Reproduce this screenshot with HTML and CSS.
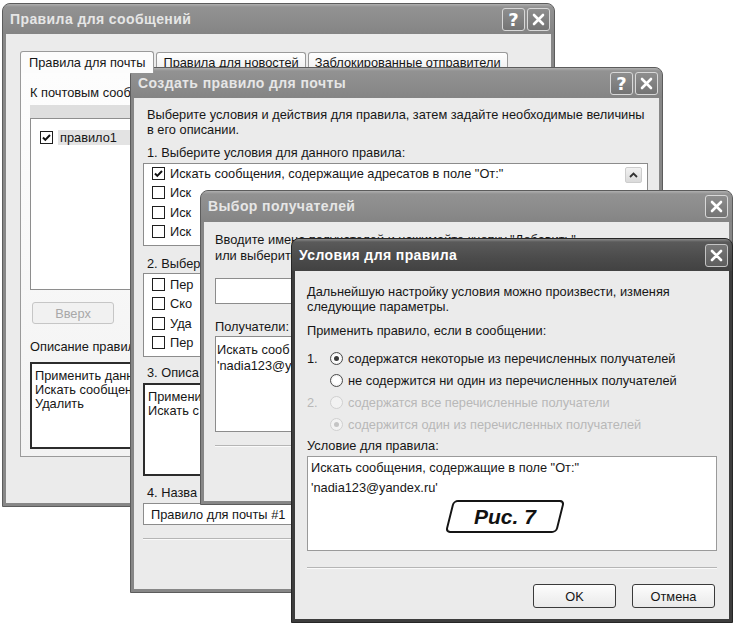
FILE: index.html
```html
<!DOCTYPE html>
<html lang="ru">
<head>
  <meta charset="UTF-8">
  <title>Правила для сообщений</title>
  <link rel="stylesheet" href="styles.css">
</head>
<body>
<div class="desk">

  <!-- окно 1 (видна только левая часть, остальное под окном 2) -->
  <section class="win w-rules">
    <header class="title">
      <span class="caption">Правила для сообщений</span>
      <span class="tb-btns">
        <span class="tb-btn">?</span>
        <span class="tb-btn"><svg width="13" height="13" viewBox="0 0 13 13"><path d="M2 2l9 9M11 2l-9 9" stroke="#fff" stroke-width="2.6" stroke-linecap="round"/></svg></span>
      </span>
    </header>
    <div class="body">
      <div class="tabs">
        <span class="tab active">Правила для почты</span>
        <span class="tab">Правила для новостей</span>
        <span class="tab">Заблокированные отправители</span>
      </div>
      <div class="tab-panel">
        <p>К почтовым сооб</p>
        <div class="rule-list">
          <div class="rule-head"></div>
          <div class="rule-body">
            <div class="rule-row">
              <i class="chk on"><svg width="11" height="11" viewBox="0 0 11 11"><path d="M2 5.5l2.3 2.4L9 3" stroke="#111" stroke-width="2" fill="none"/></svg></i>
              <span class="sel">правило1</span>
            </div>
          </div>
        </div>
        <button class="btn btn-up" disabled>Вверх</button>
        <p class="lbl-desc">Описание правил</p>
        <div class="desc">Применить данн<br>Искать сообщен<br>Удалить</div>
      </div>
    </div>
  </section>

  <!-- окно 2 -->
  <section class="win w-new">
    <header class="title">
      <span class="caption">Создать правило для почты</span>
      <span class="tb-btns">
        <span class="tb-btn">?</span>
        <span class="tb-btn"><svg width="13" height="13" viewBox="0 0 13 13"><path d="M2 2l9 9M11 2l-9 9" stroke="#fff" stroke-width="2.6" stroke-linecap="round"/></svg></span>
      </span>
    </header>
    <div class="body">
      <p class="lbl">Выберите условия и действия для правила, затем задайте необходимые величины<br>в его описании.</p>
      <p class="lbl l-1">1. Выберите условия для данного правила:</p>
      <div class="chk-list list-cond">
        <div class="items">
          <div class="item"><i class="chk on"><svg width="11" height="11" viewBox="0 0 11 11"><path d="M2 5.5l2.3 2.4L9 3" stroke="#111" stroke-width="2" fill="none"/></svg></i>Искать сообщения, содержащие адресатов в поле "От:"</div>
          <div class="item"><i class="chk"></i>Иск</div>
          <div class="item"><i class="chk"></i>Иск</div>
          <div class="item"><i class="chk"></i>Иск</div>
        </div>
        <div class="scroll">
          <span class="arrow"><svg width="9" height="6" viewBox="0 0 9 6"><path d="M1 5l3.5-3.5L8 5" stroke="#333" stroke-width="1.8" fill="none"/></svg></span>
        </div>
      </div>
      <p class="lbl l-2">2. Выбер</p>
      <div class="chk-list list-act">
        <div class="items">
          <div class="item"><i class="chk"></i>Пер</div>
          <div class="item"><i class="chk"></i>Ско</div>
          <div class="item"><i class="chk"></i>Уда</div>
          <div class="item"><i class="chk"></i>Пер</div>
        </div>
      </div>
      <p class="lbl l-3">3. Описа</p>
      <div class="desc desc-new">Примени<br>Искать с</div>
      <p class="lbl l-4">4. Назва</p>
      <div class="field">Правило для почты #1</div>
      <hr class="sep sep-new">
    </div>
  </section>

  <!-- окно 3 -->
  <section class="win w-pick">
    <header class="title">
      <span class="caption">Выбор получателей</span>
      <span class="tb-btns">
        <span class="tb-btn"><svg width="13" height="13" viewBox="0 0 13 13"><path d="M2 2l9 9M11 2l-9 9" stroke="#fff" stroke-width="2.6" stroke-linecap="round"/></svg></span>
      </span>
    </header>
    <div class="body">
      <p class="pick-line">Вводите имена получателей и нажимайте кнопку "Добавить"</p>
      <p>или выберите</p>
      <div class="field field-pick"></div>
      <p class="lbl-rcpt">Получатели:</p>
      <div class="rcpt">Искать сооб<br>'nadia123@y</div>
      <hr class="sep sep-pick">
    </div>
  </section>

  <!-- окно 4 -->
  <section class="win w-cond">
    <header class="title">
      <span class="caption">Условия для правила</span>
      <span class="tb-btns">
        <span class="tb-btn"><svg width="13" height="13" viewBox="0 0 13 13"><path d="M2 2l9 9M11 2l-9 9" stroke="#fff" stroke-width="2.6" stroke-linecap="round"/></svg></span>
      </span>
    </header>
    <div class="body">
      <p>Дальнейшую настройку условия можно произвести, изменяя<br>следующие параметры.</p>
      <p class="lbl-apply">Применить правило, если в сообщении:</p>
      <div class="opts">
        <span class="num">1.</span><span class="opt"><i class="radio on"></i>содержатся некоторые из перечисленных получателей</span>
        <span class="num"></span><span class="opt"><i class="radio"></i>не содержится ни один из перечисленных получателей</span>
        <span class="num off">2.</span><span class="opt off"><i class="radio"></i>содержатся все перечисленные получатели</span>
        <span class="num"></span><span class="opt off"><i class="radio on"></i>содержится один из перечисленных получателей</span>
      </div>
      <p class="lbl-cond">Условие для правила:</p>
      <div class="cond-box">
        Искать сообщения, содержащие в поле "От:"<br>'nadia123@yandex.ru'
        <div class="fig"><span>Рис. 7</span></div>
      </div>
      <hr class="sep sep-cond">
      <div class="actions">
        <button class="btn btn-dlg">OK</button>
        <button class="btn btn-dlg">Отмена</button>
      </div>
    </div>
  </section>

</div>
</body>
</html>
```

FILE: styles.css
```css
body {
  margin: 0;
  background: #fff;
  font-family: "Liberation Sans", Arial, sans-serif;
  font-size: 12.8px;
  line-height: 15px;
  color: #161616;
}

p { margin: 0; }

.desk {
  position: relative;
  width: 737px;
  height: 629px;
  overflow: hidden;
}

/* окна */
.win {
  position: absolute;
  display: flex;
  flex-direction: column;
  box-sizing: border-box;
  padding: 0 3px 3px;
  background: #878787;
  border: 1px solid #5c5c5c;
  border-radius: 8px 8px 0 0;
}
.w-rules { left: 2px;   top: 3px;   width: 553px; height: 504px; }
.w-new   { left: 130px; top: 67px;  width: 533px; height: 526px; }
.w-pick  { left: 200px; top: 190px; width: 533px; height: 315px; }
.w-cond  { left: 291px; top: 238px; width: 442px; height: 385px; background: #3d3d3d; border-color: #262626; }

.title {
  display: flex;
  align-items: center;
  justify-content: space-between;
  height: 30px;
  margin: 0 -3px;
  padding: 0 4px 0 7px;
  border-radius: 7px 7px 0 0;
  background: linear-gradient(#b0b0b0, #929292 3px, #8b8b8b 60%, #848484);
  color: #e6e6e6;
  font-weight: bold;
  font-size: 14px;
  letter-spacing: 0.4px;
}
.w-pick .title { height: 31px; }
.w-cond .title {
  height: 32px;
  background: linear-gradient(#8a8a8a, #5a5a5a 3px, #4b4b4b 60%, #424242);
  color: #fff;
}

.tb-btns { display: flex; gap: 2px; }
.tb-btn {
  display: flex;
  align-items: center;
  justify-content: center;
  width: 21px;
  height: 21px;
  border: 1px solid #d8d8d8;
  border-radius: 3px;
  background: linear-gradient(#8e8e8e, #747474);
  color: #fff;
  font: bold 18px/21px "DejaVu Sans", sans-serif;
  letter-spacing: 0;
}
.w-cond .tb-btn { background: linear-gradient(#777, #5e5e5e); border-color: #c4c4c4; }

.body {
  flex: 1;
  min-height: 0;
  overflow: hidden;
  background: #ebebeb;
  white-space: nowrap;
}

/* чекбоксы и радиокнопки */
.chk {
  display: inline-flex;
  align-items: center;
  justify-content: center;
  flex: none;
  width: 11px;
  height: 11px;
  border: 1px solid #1e1e1e;
  background: #fff;
}
.radio {
  position: relative;
  flex: none;
  width: 11px;
  height: 11px;
  border: 1px solid #4a4a4a;
  border-radius: 50%;
  background: radial-gradient(#fff 40%, #e2e2e2);
}
.radio.on::after {
  content: "";
  position: absolute;
  left: 3px; top: 3px;
  width: 5px; height: 5px;
  border-radius: 50%;
  background: #3a3a3a;
}
.off { color: #b8b8b8; }
.off .radio { border-color: #d0d0d0; background: #f2f2f2; }
.off .radio.on::after { background: #c4c4c4; }

.btn {
  box-sizing: border-box;
  font: inherit;
  color: #161616;
  border: 1px solid #3a3a3a;
  border-radius: 3px;
  background: linear-gradient(#fdfdfd, #e9e9e9);
  padding: 0;
}
.btn:disabled { color: #a8a8a8; border-color: #c6c6c6; background: #f1f1f1; }

.sep {
  margin: 0;
  height: 0;
  border: 0;
  border-top: 1px solid #b5b5b5;
  border-bottom: 1px solid #fafafa;
}

.desc {
  box-sizing: border-box;
  height: 87px;
  padding: 5px 1px 0 3px;
  line-height: 14px;
  background: #fff;
  border: 2px solid #2c2c2c;
}

/* окно 1 */
.w-rules .body { padding: 16px 14px 0; }
.tabs {
  display: flex;
  align-items: flex-end;
  height: 22px;
}
.tab {
  height: 19px;
  padding: 0 6px;
  margin-right: 2px;
  border: 1px solid #9a9a9a;
  border-bottom: 0;
  border-radius: 3px 3px 0 0;
  background: linear-gradient(#fff, #ededed);
  line-height: 20px;
}
.tab.active {
  position: relative;
  z-index: 1;
  height: 21px;
  padding: 0 8px;
  margin-bottom: -1px;
  background: #fcfcfc;
  line-height: 22px;
}
.tab-panel {
  padding: 12px 9px 7px;
  border: 1px solid #9a9a9a;
  background: linear-gradient(#fdfdfd, #f2f2f2);
}
.rule-list { width: 390px; margin-top: 5px; }
.rule-head { height: 13px; background: #dedede; }
.rule-body {
  height: 160px;
  padding: 10px 0 0 9px;
  border: 1px solid #8e8e8e;
  background: #fff;
}
.rule-row { display: flex; align-items: center; gap: 5px; height: 16px; }
.sel { padding: 0 70px 0 2px; background: #e3e3e3; }
.btn-up { display: block; width: 82px; height: 22px; margin: 12px 0 0 2px; }
.lbl-desc { margin-top: 15px; }
.w-rules .desc { width: 400px; margin-top: 8px; }

/* окно 2 */
.w-new .body { padding: 9px 11px 0 9px; }
.lbl { padding-left: 4px; }
.l-1 { margin-top: 8px; }
.l-2 { margin-top: 10px; }
.l-3 { margin-top: 8.5px; }
.l-4 { margin-top: 9.5px; }
.chk-list {
  display: flex;
  box-sizing: border-box;
  border: 1px solid #8c8c8c;
  background: #fff;
}
.list-cond { height: 83px; margin-top: 2.5px; }
.list-act { height: 84px; margin-top: 2px; padding-top: 1px; }
.items { flex: 1; padding-left: 8px; overflow: hidden; }
.item { display: flex; align-items: center; gap: 5px; height: 19.5px; }
.scroll { width: 18px; padding: 3px 4px 0 0; }
.arrow {
  display: flex;
  align-items: center;
  justify-content: center;
  width: 15px;
  height: 14px;
  border: 1px solid #cdcdcd;
  border-radius: 2px;
  background: linear-gradient(#f2f2f2, #dadada);
}
.desc-new { height: 93px; margin-top: 2.5px; }
.field {
  box-sizing: border-box;
  height: 22px;
  margin-top: 2.5px;
  padding: 3px 7px;
  border: 1px solid #8c8c8c;
  background: #fff;
}
.sep-new { margin-top: 13px; }

/* окно 3 */
.w-pick .body { padding: 10.5px 11px 0; }
.pick-line { line-height: 13px; margin-bottom: 2px; }
.field-pick { height: 26px; margin-top: 15.5px; }
.lbl-rcpt { margin-top: 14.5px; }
.rcpt {
  box-sizing: border-box;
  height: 96px;
  margin-top: 2.5px;
  padding: 5px 1px 0;
  line-height: 16px;
  border: 1px solid #8c8c8c;
  background: #fff;
}
.sep-pick { margin-top: 13px; }

/* окно 4 */
.w-cond .body { padding: 12.5px 12px 0; }
.lbl-apply { margin-top: 9px; }
.opts {
  display: grid;
  grid-template-columns: 23px 1fr;
  grid-auto-rows: 22px;
  align-items: center;
  margin-top: 9.5px;
}
.opt { display: flex; align-items: center; gap: 5px; }
.lbl-cond { margin-top: 2.5px; }
.cond-box {
  box-sizing: border-box;
  height: 95px;
  margin-top: 3.5px;
  padding: 1px 3px 0;
  line-height: 20px;
  border: 1px solid #9a9a9a;
  background: #fff;
}
.fig {
  display: flex;
  align-items: center;
  justify-content: center;
  width: 108px;
  height: 29px;
  margin: 2px 0 0 138px;
  border: 2px solid #151515;
  border-radius: 5px;
  background: #fff;
  transform: skewX(-14deg);
}
.fig span {
  transform: skewX(14deg);
  font: italic bold 21px/29px "Liberation Sans", Arial, sans-serif;
  color: #111;
}
.sep-cond { margin-top: 16px; }
.actions {
  display: flex;
  justify-content: flex-end;
  gap: 16px;
  margin: 15px 2px 0 0;
}
.btn-dlg { width: 83px; height: 24px; }
```
